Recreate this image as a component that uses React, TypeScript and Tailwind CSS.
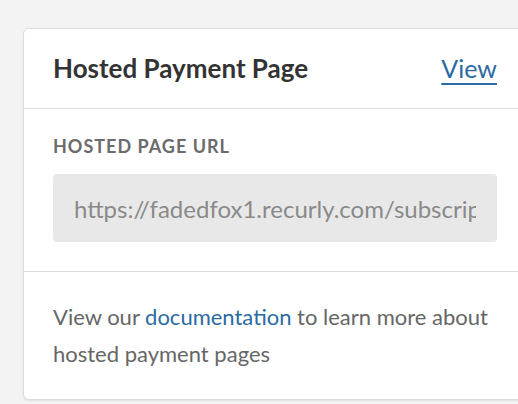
export default function App() {
  return (
    <div className="h-[404px] w-[518px] overflow-hidden bg-[#f3f3f3] pt-[28px] font-['Lato',sans-serif]">
      <div className="ml-[23px] w-[504px] rounded-[6px] border border-[#dcdcdc] bg-white shadow-[0_1px_2px_rgba(0,0,0,0.08)]">
        <div className="flex h-[80px] items-center justify-between border-b border-[#dcdcdc] px-[29px]">
          <h2 className="text-[26px] font-bold text-[#333333]">Hosted Payment Page</h2>
          <a href="#" className="text-[25px] text-[#2b6aa3] underline decoration-2 underline-offset-[5px]">
            View
          </a>
        </div>
        <div className="border-b border-[#dcdcdc] px-[29px] pb-[29px] pt-[25px]">
          <p className="mb-[16px] text-[18px] leading-[24px] font-bold tracking-[1px] text-[#6b6b6b] uppercase">
            Hosted Page URL
          </p>
          <input
            readOnly
            value="https://fadedfox1.recurly.com/subscriptions/hosted-page"
            className="block h-[68px] w-full rounded-[4px] bg-[#e8e8e8] px-[21px] text-[24px] text-[#8a8a8a] outline-none"
          />
        </div>
        <div className="px-[29px] pb-[27px] pt-[26px]">
          <p className="text-[22px] leading-[37px] text-[#666666]">
            View our{' '}
            <a href="#" className="text-[#2b6aa3]">
              documentation
            </a>{' '}
            to learn more about hosted payment pages
          </p>
        </div>
      </div>
    </div>
  );
}
